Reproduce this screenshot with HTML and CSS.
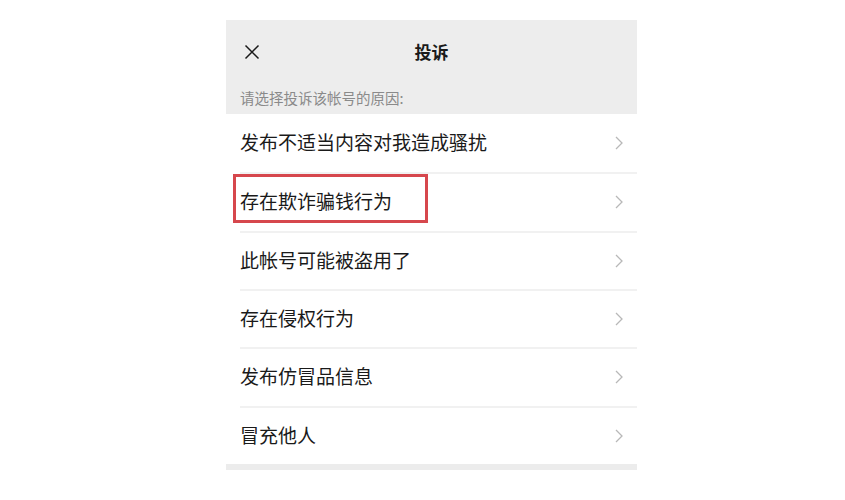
FILE: index.html
```html
<!DOCTYPE html>
<html lang="zh">
<head>
<meta charset="utf-8">
<link rel="stylesheet" href="styles.css">
</head>
<body>
<div class="panel">
  <div class="header">
    <svg class="close" viewBox="0 0 16 16" width="16" height="16"><path d="M1.5 1.5 L14.5 14.5 M14.5 1.5 L1.5 14.5" stroke="#1a1a1a" stroke-width="1.5" fill="none"/></svg>
    <div class="title">投诉</div>
  </div>
  <div class="subtitle">请选择投诉该帐号的原因:</div>
  <div class="list">
    <div class="row"><span class="label">发布不适当内容对我造成骚扰</span><svg class="chev" viewBox="0 0 8 14" width="8" height="14"><path d="M1 1 L7 7 L1 13" stroke="#b8b8b8" stroke-width="1.3" fill="none"/></svg></div>
    <div class="row"><span class="label">存在欺诈骗钱行为</span><svg class="chev" viewBox="0 0 8 14" width="8" height="14"><path d="M1 1 L7 7 L1 13" stroke="#b8b8b8" stroke-width="1.3" fill="none"/></svg><div class="mark"></div></div>
    <div class="row"><span class="label">此帐号可能被盗用了</span><svg class="chev" viewBox="0 0 8 14" width="8" height="14"><path d="M1 1 L7 7 L1 13" stroke="#b8b8b8" stroke-width="1.3" fill="none"/></svg></div>
    <div class="row"><span class="label">存在侵权行为</span><svg class="chev" viewBox="0 0 8 14" width="8" height="14"><path d="M1 1 L7 7 L1 13" stroke="#b8b8b8" stroke-width="1.3" fill="none"/></svg></div>
    <div class="row"><span class="label">发布仿冒品信息</span><svg class="chev" viewBox="0 0 8 14" width="8" height="14"><path d="M1 1 L7 7 L1 13" stroke="#b8b8b8" stroke-width="1.3" fill="none"/></svg></div>
    <div class="row"><span class="label">冒充他人</span><svg class="chev" viewBox="0 0 8 14" width="8" height="14"><path d="M1 1 L7 7 L1 13" stroke="#b8b8b8" stroke-width="1.3" fill="none"/></svg></div>
  </div>
  <div class="footer"></div>
</div>
</body>
</html>
```
FILE: styles.css
```css
html, body {
  margin: 0;
  padding: 0;
  background: #ffffff;
}
body {
  font-family: "Noto Sans CJK SC", "Noto Sans", sans-serif;
  padding-top: 20px;
  padding-left: 226px;
}
.panel {
  width: 411px;
  display: flex;
  flex-direction: column;
}
.header {
  position: relative;
  height: 64px;
  background: #ededed;
  display: flex;
  align-items: center;
  justify-content: center;
  padding-bottom: 2px;
  box-sizing: border-box;
}
.close {
  position: absolute;
  left: 18px;
  top: 24px;
}
.title {
  font-size: 17px;
  font-weight: 700;
  color: #1a1a1a;
}
.subtitle {
  height: 30px;
  background: #ededed;
  box-sizing: border-box;
  padding: 4px 0 0 14px;
  font-size: 14.5px;
  line-height: 20px;
  color: #8a8a8a;
}
.list {
  display: flex;
  flex-direction: column;
  background: #fff;
}
.row {
  position: relative;
  height: 58.33px;
  box-sizing: border-box;
  margin-left: 14px;
  padding-right: 14px;
  display: flex;
  align-items: center;
  justify-content: space-between;
  border-top: 2px solid #f1f1f1;
}
.row:first-child {
  border-top: none;
}
.label {
  font-size: 19px;
  color: #1a1a1a;
  margin-bottom: 3px;
}
.chev {
  display: block;
}
.mark {
  position: absolute;
  left: -7px;
  top: 0px;
  width: 195px;
  height: 49px;
  border: 3px solid #d6474d;
  box-sizing: border-box;
}
.footer {
  height: 6px;
  background: #ececec;
}
```
